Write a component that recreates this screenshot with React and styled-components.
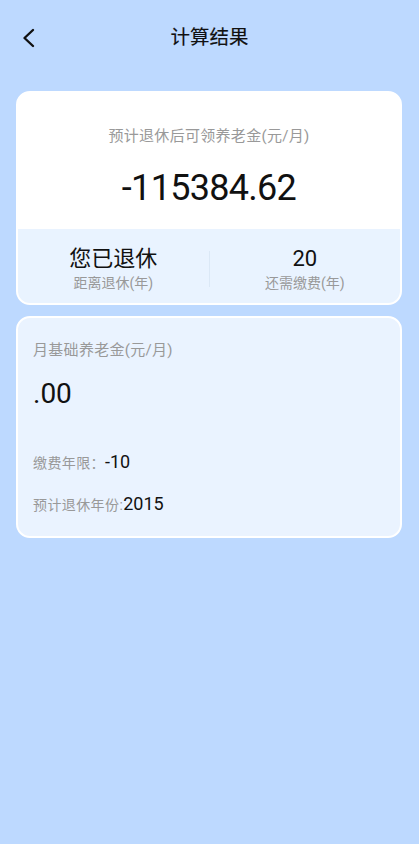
import styled, { createGlobalStyle } from "styled-components"

const GlobalStyle = createGlobalStyle`
  html, body {
    margin: 0;
    padding: 0;
    background: #bdd9ff;
  }
  body {
    font-family: Roboto, "Noto Sans CJK SC", sans-serif;
    color: #111;
  }
`;

function BackIcon() {
  return (
    <svg width="13" height="20" viewBox="0 0 13 20" fill="none">
      <polyline points="11,2 2.5,10 11,18" stroke="#111" strokeWidth="2.4" strokeLinecap="round" strokeLinejoin="round" />
    </svg>
  )
}

function App() {
  return (
    <Page>
      <GlobalStyle />
      <Header>
        <BackButton><BackIcon /></BackButton>
        <Title>计算结果</Title>
      </Header>

      <ResultCard>
        <ResultTop>
          <Caption>预计退休后可领养老金(元/月)</Caption>
          <BigValue>-115384.62</BigValue>
        </ResultTop>
        <StatsRow>
          <Stat>
            <StatValue>您已退休</StatValue>
            <StatLabel>距离退休(年)</StatLabel>
          </Stat>
          <Divider />
          <Stat>
            <StatValue>20</StatValue>
            <StatLabel>还需缴费(年)</StatLabel>
          </Stat>
        </StatsRow>
      </ResultCard>

      <DetailCard>
        <Caption $left>月基础养老金(元/月)</Caption>
        <MidValue>.00</MidValue>
        <InfoRow $top={37}>
          <InfoLabel>缴费年限：</InfoLabel>
          <InfoValue>-10</InfoValue>
        </InfoRow>
        <InfoRow $top={15}>
          <InfoLabel>预计退休年份:</InfoLabel>
          <InfoValue>2015</InfoValue>
        </InfoRow>
      </DetailCard>
    </Page>
  )
}

const Page = styled.div`
  min-height: 100vh;
  padding: 0 17px 20px 16px;
  box-sizing: border-box;
  background: #bdd9ff;
`;

const Header = styled.div`
  position: relative;
  height: 76px;
  display: flex;
  align-items: center;
  justify-content: center;
`;

const BackButton = styled.div`
  position: absolute;
  left: 6px;
  top: 28px;
  width: 13px;
  height: 20px;
  display: flex;
`;

const Title = styled.div`
  font-size: 19.5px;
  font-weight: 400;
  line-height: 26px;
  color: #111;
  margin-left: 1px;
  -webkit-text-stroke: 0.15px #111;
`;

const Card = styled.div`
  border: 2px solid #ffffff;
  border-radius: 14px;
  overflow: hidden;
`;

const ResultCard = styled(Card)`
  margin-top: 15px;
  background: #ffffff;
`;

const ResultTop = styled.div`
  padding: 33px 0 19px;
  display: flex;
  flex-direction: column;
  align-items: center;
`;

const Caption = styled.div`
  font-size: 15px;
  line-height: 20px;
  color: #999;
  letter-spacing: 0.3px;
  text-align: ${p => (p.$left ? "left" : "center")};
`;

const BigValue = styled.div`
  margin-top: 20px;
  font-size: 36px;
  line-height: 44px;
  letter-spacing: -0.7px;
  color: #111;
`;

const StatsRow = styled.div`
  display: flex;
  align-items: center;
  background: #e9f3ff;
  padding: 16px 0 10px;
`;

const Stat = styled.div`
  flex: 1;
  display: flex;
  flex-direction: column;
  align-items: center;
`;

const StatValue = styled.div`
  font-size: 22px;
  line-height: 28px;
  color: #111;
`;

const StatLabel = styled.div`
  font-size: 14px;
  line-height: 20px;
  color: #999;
`;

const Divider = styled.div`
  width: 1px;
  height: 36px;
  background: #dbe8f6;
`;

const DetailCard = styled(Card)`
  margin-top: 11px;
  background: #eaf3ff;
  padding: 22px 17px 18px 15px;
`;

const MidValue = styled.div`
  margin-top: 16px;
  font-size: 28px;
  line-height: 36px;
  color: #111;
`;

const InfoRow = styled.div`
  margin-top: ${p => p.$top}px;
  display: flex;
  align-items: baseline;
  line-height: 26px;
`;

const InfoLabel = styled.span`
  font-size: 14px;
  color: #999;
  letter-spacing: 0.4px;
`;

const InfoValue = styled.span`
  font-size: 18px;
  color: #111;
`;

export default App;
